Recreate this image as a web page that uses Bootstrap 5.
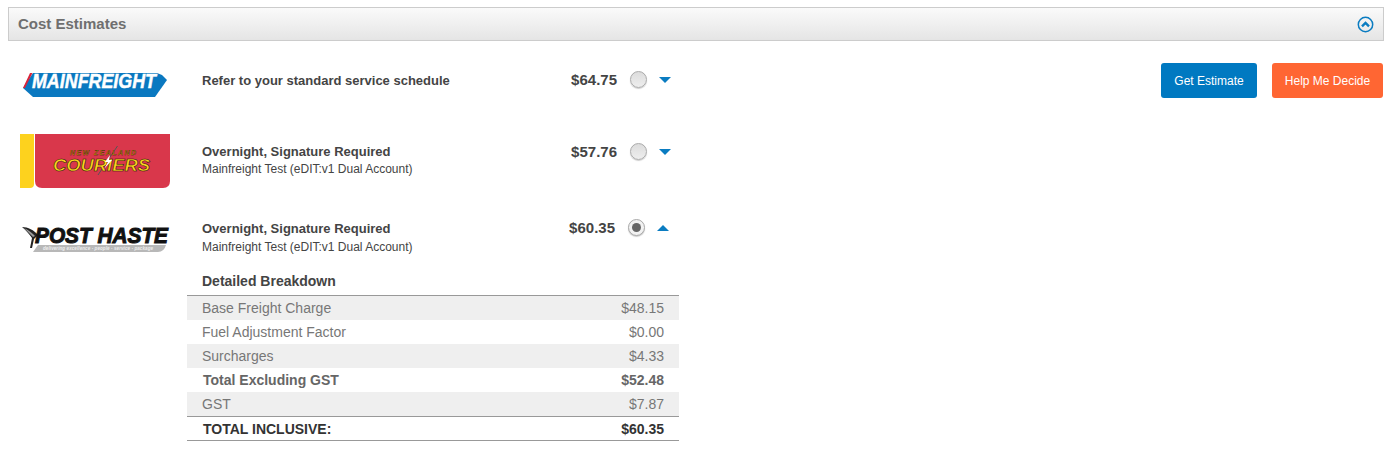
<!DOCTYPE html>
<html lang="en"><head><meta charset="utf-8"><title>Cost Estimates</title>
<link href="https://cdn.jsdelivr.net/npm/bootstrap@5.3.0/dist/css/bootstrap.min.css" rel="stylesheet">
<style>
body{font-family:"Liberation Sans",Arial,sans-serif;color:#333;background:#fff;padding:7px 9px 0 8px;font-size:12px}
.panel-head{height:34px;border:1px solid #ccc;background:linear-gradient(#fafafa,#e5e5e5);padding:0 9px}
.panel-title{font-size:15px;font-weight:700;color:#6f6f6f}
.toggle-ic{margin-top:1px}
.body-wrap{padding-top:16px}
.quotes{width:671px}
.quote-line{display:flex;align-items:flex-start}
.logo-cell{width:194px;flex:none;padding-left:12px}
.logo-cell svg{display:block;overflow:visible}
.info-cell{flex:1}
.svc{font-size:13px;font-weight:700;color:#444;line-height:14px}
.acct{font-size:12px;color:#444;line-height:14px;margin-top:3px}
.price-cell{display:flex;align-items:center;width:108px;justify-content:flex-end;flex:none;padding-right:8px}
.price{font-size:15px;font-weight:700;color:#444;line-height:16px}
.radio-dot{width:17px;height:17px;border-radius:50%;border:1px solid #aaa;background:linear-gradient(#dcdcdc,#eee);margin:0 12px 0 13px;display:flex;align-items:center;justify-content:center;box-shadow:0 1px 1px #ccc;flex:none}
.radio-dot.picked{background:#f2f2f2}
.radio-dot.picked::after{content:"";width:9px;height:9px;border-radius:50%;background:#666}
.caret-d,.caret-u{width:0;height:0;border-left:6px solid transparent;border-right:6px solid transparent;flex:none}
.caret-d{border-top:6px solid #0a7cc1}
.caret-u{border-bottom:6px solid #0a7cc1}
.line-a{height:61px}
.line-a .info-cell{padding-top:17px}
.line-a .price-cell{padding-top:14px}
.line-a .logo-cell{padding-top:15px}
.line-b{height:91px;padding-top:16px}
.line-b .info-cell{padding-top:11px}
.line-b .price-cell{padding-top:9px}
.line-c{height:44px;padding-top:6px}
.line-c .price-cell{padding-right:10px;padding-top:4px}
.line-c .info-cell{padding-top:7px}
.line-c .acct{margin-top:4px}
.line-c .logo-cell{padding-top:9px}
.breakdown{margin-left:179px;width:492px;margin-top:19px;font-size:14px;color:#777}
.bd-title{font-size:14px;font-weight:700;color:#444;padding-left:15px;height:23px;line-height:18px;border-bottom:1px solid #999;box-sizing:content-box}
.bd-row{display:flex;justify-content:space-between;height:24px;line-height:24px;padding:0 15px}
.bd-row.shade{background:#efefef}
.bd-row.strong{font-weight:700;color:#666}
.bd-row.grand{font-weight:700;color:#333;border-top:1px solid #999;border-bottom:1px solid #999;height:25px;line-height:24px}
.bd-row.strong span:first-child,.bd-row.grand span:first-child{padding-left:1px}
.action-set{gap:15px;padding-top:6px;padding-right:1px}
.btn-quote{font-size:12px;color:#fff;border:0;border-radius:3px;height:35px;padding:0;display:flex;align-items:center;justify-content:center}
.btn-quote.blue{background:#0079c1;width:96px}
.btn-quote.orange{background:#ff6633;width:111px}
.btn-quote:hover{color:#fff}
.logo-txt{font-family:"Liberation Sans",Arial,sans-serif;font-weight:700;font-style:italic}
</style></head>
<body>
<div class="panel-head d-flex align-items-center justify-content-between">
  <span class="panel-title">Cost Estimates</span>
  <svg width="17" height="17" viewBox="0 0 17 17" class="toggle-ic"><circle cx="8.500" cy="8.500" r="7.200" fill="none" stroke="#0a7cc1" stroke-width="1.500"/><path d="M5 10.400 8.500 7 12 10.400" fill="none" stroke="#0a7cc1" stroke-width="2.400"/></svg>
</div>
<div class="body-wrap d-flex justify-content-between align-items-start">
  <div class="quotes">
    <div class="quote-line line-a">
      <div class="logo-cell">
        <svg width="150" height="26" viewBox="0 0 150 26">
          <path d="M13 1H137L142 3 147 8 135 25H13L3 16z" fill="#0a78c0"/>
          <path d="M10 1h2.500L5 16H3z" fill="#d9243a"/>
          <text x="12" y="15.500" class="logo-txt" font-size="21" textLength="124" lengthAdjust="spacingAndGlyphs" fill="#fff" stroke="#fff" stroke-width=".5">MAINFREIGHT</text>
        </svg>
      </div>
      <div class="info-cell"><div class="svc">Refer to your standard service schedule</div></div>
      <div class="price-cell"><span class="price">$64.75</span><span class="radio-dot"></span><span class="caret-d"></span></div>
    </div>
    <div class="quote-line line-b">
      <div class="logo-cell">
        <svg width="150" height="54" viewBox="0 0 150 54">
          <path d="M0 0H14V50q0 4-4 4H0z" fill="#fdd21e"/>
          <path d="M15 0H150V47q0 7-7 7H22q-7 0-7-7z" fill="#d9374b"/>
          <path d="M97.500 12 78 41" stroke="#555" stroke-width="1" fill="none"/>
          <text x="50" y="20.500" class="logo-txt" font-size="7" textLength="66" fill="#b8860b" stroke="#1a1208" stroke-width=".25">NEW ZEALAND</text>
          <text x="33" y="36.500" class="logo-txt" font-size="16" textLength="97" lengthAdjust="spacingAndGlyphs" fill="#fdd21e" stroke="#1a1208" stroke-width=".5">COURIERS</text>
          <path d="M90 21 85 28h3l-4 7 8-9h-3z" fill="#fff"/>
        </svg>
      </div>
      <div class="info-cell"><div class="svc">Overnight, Signature Required</div><div class="acct">Mainfreight Test (eDIT:v1 Dual Account)</div></div>
      <div class="price-cell"><span class="price">$57.76</span><span class="radio-dot"></span><span class="caret-d"></span></div>
    </div>
    <div class="quote-line line-c">
      <div class="logo-cell">
        <svg width="150" height="30" viewBox="0 0 150 30">
          <path d="M18 21H146q-2 7-8 7H13z" fill="#b8b8b8"/>
          <path d="M2 3C8 3 14 6 18 11L14 15 12 24H10L12 14C9 10 6 6 2 3z" fill="#222"/>
          <path d="M4 4C9 6 12 9 15 12L13 13C10 10 7 7 4 4z" fill="#999"/>
          <text x="15" y="19" class="logo-txt" font-size="22" textLength="133" lengthAdjust="spacingAndGlyphs" fill="#111" stroke="#111" stroke-width="1">POST HASTE</text>
          <text x="23" y="26.200" class="logo-txt" font-size="4.500" textLength="110" fill="#eee">delivering excellence · people · service · package</text>
        </svg>
      </div>
      <div class="info-cell"><div class="svc">Overnight, Signature Required</div><div class="acct">Mainfreight Test (eDIT:v1 Dual Account)</div></div>
      <div class="price-cell"><span class="price">$60.35</span><span class="radio-dot picked"></span><span class="caret-u"></span></div>
    </div>
    <div class="breakdown">
      <div class="bd-title">Detailed Breakdown</div>
      <div class="bd-row shade"><span>Base Freight Charge</span><span>$48.15</span></div>
      <div class="bd-row"><span>Fuel Adjustment Factor</span><span>$0.00</span></div>
      <div class="bd-row shade"><span>Surcharges</span><span>$4.33</span></div>
      <div class="bd-row strong"><span>Total Excluding GST</span><span>$52.48</span></div>
      <div class="bd-row shade"><span>GST</span><span>$7.87</span></div>
      <div class="bd-row grand"><span>TOTAL INCLUSIVE:</span><span>$60.35</span></div>
    </div>
  </div>
  <div class="d-flex action-set">
    <a href="#" class="btn btn-quote blue">Get Estimate</a>
    <a href="#" class="btn btn-quote orange">Help Me Decide</a>
  </div>
</div>
<script src="https://cdn.jsdelivr.net/npm/bootstrap@5.3.0/dist/js/bootstrap.bundle.min.js"></script>
</body></html>
